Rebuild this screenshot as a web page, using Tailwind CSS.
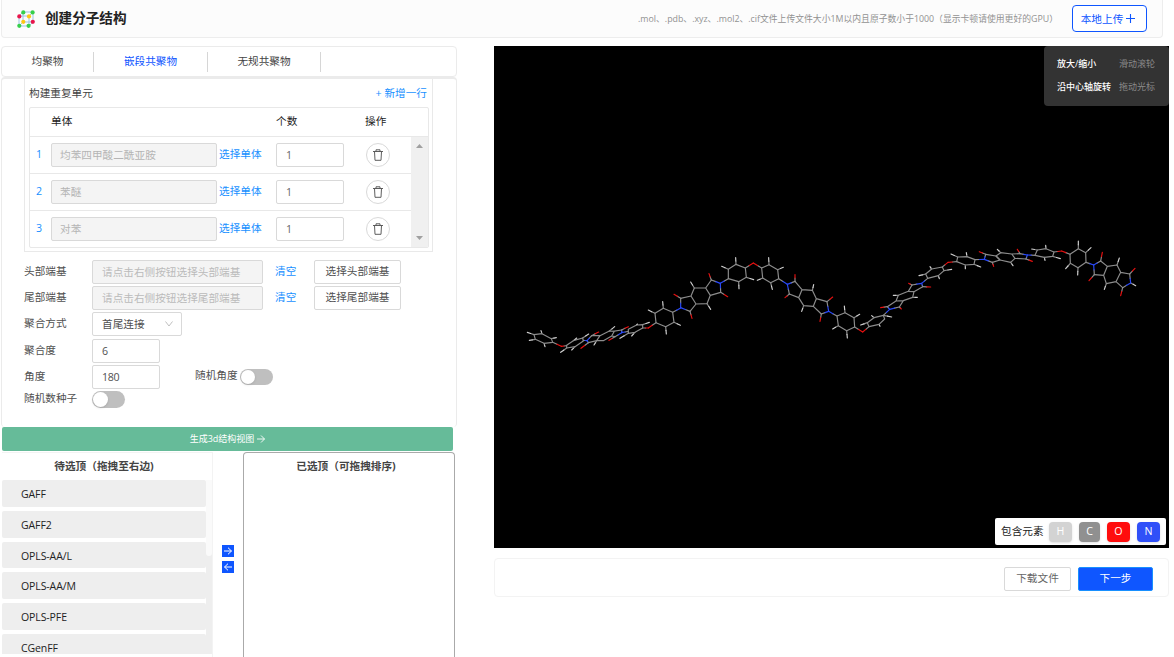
<!DOCTYPE html>
<html lang="zh-CN">
<head>
<meta charset="utf-8">
<title>创建分子结构</title>
<script src="https://cdn.jsdelivr.net/npm/@tailwindcss/browser@4"></script>
</head>
<body class="bg-white">
<div class="flex h-[657px] w-[1174px] flex-col overflow-hidden font-['Open_Sans','Noto_Sans_CJK_SC',sans-serif] text-[10.65px] leading-4 whitespace-nowrap text-[#505050]">
  <header class="ml-px flex h-[38px] w-[1162px] shrink-0 items-center rounded-b border border-t-0 border-[#ededed] bg-[#fcfcfc] pr-[15px] pl-[15px]">
    <svg class="h-[18px] w-[18px] shrink-0" viewBox="0 0 18 18">
      <path d="M6 2H16V12L12 16H2V6ZM2 6H12V16M12 6L16 2M6 2V12H16M6 12L2 16" fill="none" stroke="#9cc4e4" stroke-width="1"/>
      <g fill="#36d04a"><circle cx="6.3" cy="2.4" r="2.1"/><circle cx="15.6" cy="2.4" r="2.1"/><circle cx="2.3" cy="15.8" r="2.1"/><circle cx="11.6" cy="15.8" r="2.1"/></g>
      <g fill="#e8154a"><circle cx="2.3" cy="6.4" r="2.1"/><circle cx="15.8" cy="11.8" r="2.1"/></g>
      <g fill="#fdc713"><circle cx="12" cy="6.4" r="2.1"/><circle cx="6.3" cy="11.8" r="2.1"/></g>
    </svg>
    <h1 class="ml-[10px] pb-[2px] text-[13.6px] font-bold text-[#222]">创建分子结构</h1>
    <p class="mr-[14px] ml-auto text-[8.82px] text-[#929292]">.mol、.pdb、.xyz、.mol2、.cif文件上传文件大小1M以内且原子数小于1000（显示卡顿请使用更好的GPU）</p>
    <button class="flex h-[27px] w-[75px] shrink-0 items-center justify-center gap-[3px] rounded border border-[#0f56ff] bg-white pr-[3px] text-[#0f56ff]">本地上传<svg class="h-[9px] w-[9px]" viewBox="0 0 9 9"><path d="M4.5 0V9M0 4.5H9" stroke="currentColor" stroke-width="1.1"/></svg></button>
  </header>

  <div class="mt-2 ml-px flex min-h-0 flex-1">
    <section class="flex w-[456px] shrink-0 flex-col">
      <nav class="flex h-[31px] shrink-0 items-center rounded-sm border border-[#ebebeb] text-[#444]">
        <div class="flex h-[20px] w-[92px] items-center justify-center border-r border-[#d6d6d6] pb-[2px]">均聚物</div>
        <div class="flex h-[20px] w-[114px] items-center justify-center border-r border-[#d6d6d6] pb-[2px] text-[#0f56ff]">嵌段共聚物</div>
        <div class="flex h-[20px] w-[113px] items-center justify-center border-r border-[#d6d6d6] pb-[2px]">无规共聚物</div>
      </nav>
      <div class="h-[350px] shrink-0 rounded-sm border border-t-2 border-b-0 border-[#ebebeb] pl-[22px]">
        <div class="h-[173px] w-[409px] border border-t-0 border-[#e9e9e9] px-[4px]">
          <div class="flex h-[28px] items-center justify-between pr-px text-[#444]"><span>构建重复单元</span><span class="text-[#1890ff]">+ 新增一行</span></div>
          <div class="h-[141px] w-[400px] overflow-hidden rounded-xs border border-[#e8e8e8]">
            <div class="flex h-[28px] items-center pb-[2px] pl-[21px] text-[#222]"><span class="w-[225px]">单体</span><span class="w-[89px]">个数</span><span>操作</span></div>
            <div class="flex h-[111px]">
              <div id="rows" class="w-[381px]"></div>
              <div class="flex w-[17px] flex-col items-center justify-between border-t border-[#e8e8e8] bg-[#f0f0f0] py-[7px]">
                <svg class="h-1 w-[7px]" viewBox="0 0 7 4"><path d="M0 4L3.5 0L7 4Z" fill="#a0a0a0"/></svg>
                <svg class="h-1 w-[7px]" viewBox="0 0 7 4"><path d="M0 0L3.5 4L7 0Z" fill="#a0a0a0"/></svg>
              </div>
            </div>
          </div>
        </div>
        <div class="mt-[8px] flex h-[24px]"><span class="w-[68px] pt-[3px]">头部端基</span><div class="flex w-[171px] items-center rounded-xs border border-[#d9d9d9] bg-[#f4f4f4] pl-[9px] text-[#bbb]">请点击右侧按钮选择头部端基</div><span class="ml-[12px] w-[39px] pt-[3px] text-[#1890ff]">清空</span><button class="w-[87px] rounded-xs border border-[#d9d9d9] pb-[2px]">选择头部端基</button></div>
        <div class="mt-[2px] flex h-[24px]"><span class="w-[68px] pt-[3px]">尾部端基</span><div class="flex w-[171px] items-center rounded-xs border border-[#d9d9d9] bg-[#f4f4f4] pl-[9px] text-[#bbb]">请点击右侧按钮选择尾部端基</div><span class="ml-[12px] w-[39px] pt-[3px] text-[#1890ff]">清空</span><button class="w-[87px] rounded-xs border border-[#d9d9d9] pb-[2px]">选择尾部端基</button></div>
        <div class="mt-[2px] flex h-[24px]"><span class="w-[68px] pt-[3px]">聚合方式</span><div class="flex w-[90px] items-center justify-between rounded-xs border border-[#d9d9d9] pr-[8px] pl-[9px]">首尾连接<svg class="h-[6px] w-[8px]" viewBox="0 0 8 6"><path d="M.5 .5L4 5L7.5 .5" fill="none" stroke="#b8b8b8" stroke-width=".9"/></svg></div></div>
        <div class="mt-[3px] flex h-[24px]"><span class="w-[68px] pt-[3px]">聚合度</span><div class="flex w-[68px] items-center rounded-xs border border-[#d9d9d9] pl-[9px]">6</div></div>
        <div class="mt-[2px] flex h-[24px]"><span class="w-[68px] pt-[3px]">角度</span><div class="flex w-[68px] items-center rounded-xs border border-[#d9d9d9] pl-[9px] tracking-[-0.3px]">180</div><span class="ml-[35px] w-[45px] pt-[2px]">随机角度</span><div class="mt-[4px] h-[16px] w-[33px] rounded-full bg-[#bfbfbf] p-px"><div class="h-[14px] w-[14px] rounded-full bg-white shadow-sm"></div></div></div>
        <div class="mt-[2px] flex h-[17px]"><span class="w-[68px] leading-[14px]">随机数种子</span><div class="h-[17px] w-[33px] rounded-full bg-[#bfbfbf] p-px"><div class="h-[15px] w-[15px] rounded-full bg-white shadow-sm"></div></div></div>
      </div>
      <button class="ml-px flex h-[24px] w-[451px] shrink-0 items-center justify-center gap-[3px] rounded-xs bg-[#66bb99] text-[9px] text-white">生成3d结构视图<svg class="h-[8px] w-[8px]" viewBox="0 0 8 8"><path d="M0 4H7.5M4 .5L7.5 4L4 7.5" fill="none" stroke="white" stroke-width=".9"/></svg></button>
      <div class="mt-px flex min-h-0 flex-1 pl-px">
        <div class="w-[211px] border-t border-r border-[#f3f3f3]">
          <h2 class="h-[27px] pr-[6px] text-center leading-[27px] font-bold text-[#444]">待选顶（拖拽至右边)</h2>
          <div class="flex h-[174px] overflow-hidden">
            <div id="fields" class="flex w-[204px] flex-col gap-[4px] text-[10.5px] text-[#222]"></div>
            <div class="w-[6px] bg-[#eee]"><div class="h-[76px] rounded-b bg-[#fafafa]"></div></div>
          </div>
        </div>
        <div class="flex w-[30px] flex-col items-center gap-1 pt-[93px]">
          <svg class="h-[12px] w-[12px] bg-[#0f56ff]" viewBox="0 0 12 12"><path d="M2 6H9.5M6 2.7L9.5 6L6 9.3" fill="none" stroke="white" stroke-width="1"/></svg>
          <svg class="h-[12px] w-[12px] bg-[#0f56ff]" viewBox="0 0 12 12"><path d="M10 6H2.5M6 2.7L2.5 6L6 9.3" fill="none" stroke="white" stroke-width="1"/></svg>
        </div>
        <div class="w-[212px] rounded-t border border-b-0 border-[#aaa]"><h2 class="pr-[6px] text-center leading-[27px] font-bold text-[#444]">已选顶（可拖拽排序)</h2></div>
      </div>
    </section>

    <section class="ml-[37px] w-[675px] shrink-0">
      <div class="relative h-[502px] bg-black">
        <svg id="mol" class="h-[502px] w-[675px]" viewBox="0 0 675 502" fill="none" stroke-linecap="round"></svg>
        <div class="absolute top-0 right-0 flex h-[60px] w-[125px] flex-col justify-center gap-[7px] rounded bg-[#333] pb-[2px] pl-[13px] text-[9px] text-white">
          <div class="flex"><span class="w-[62px] font-medium">放大/缩小</span><span class="text-[#8a8a8a]">滑动滚轮</span></div>
          <div class="flex"><span class="w-[62px] font-medium">沿中心轴旋转</span><span class="text-[#8a8a8a]">拖动光标</span></div>
        </div>
        <div class="absolute right-[3px] bottom-[3px] flex h-[27px] w-[171px] items-center rounded-xs bg-white pl-[6px] text-[#222]">
          <span class="w-[48px] pb-[2px]">包含元素</span>
          <div class="flex text-white">
            <span class="mr-[7px] h-5 w-[23px] rounded bg-[#d3d3d3] text-center leading-[18px] shadow-sm">H</span>
            <span class="mr-[7px] h-5 w-[21px] rounded bg-[#909090] text-center leading-[18px] shadow-sm">C</span>
            <span class="mr-[7px] h-5 w-[23px] rounded bg-[#ff0d0d] text-center leading-[18px] shadow-sm">O</span>
            <span class="h-5 w-[23px] rounded bg-[#3050f8] text-center leading-[18px] shadow-sm">N</span>
          </div>
        </div>
      </div>
      <footer class="mt-[10px] flex h-[39px] items-center justify-end gap-[7px] rounded border border-[#f3f3f3] pt-[2px] pr-[15px]">
        <button class="h-[24px] w-[67px] rounded-xs border border-[#d9d9d9] pb-[2px] text-[#666]">下载文件</button>
        <button class="h-[24px] w-[75px] rounded-xs border border-[#1890ff] bg-[#0f56ff] pb-[2px] text-white">下一步</button>
      </footer>
    </section>
  </div>
</div>
<script>
document.getElementById('rows').innerHTML = ['均苯四甲酸二酰亚胺', '苯醚', '对苯'].map((n, i) => `
  <div class="flex h-[37px] items-center border-t border-[#e8e8e8] text-[#1890ff]">
    <span class="w-[21px] pb-[2px] pl-[6px]">${i + 1}</span>
    <div class="flex h-[24px] w-[166px] items-center rounded-xs border border-[#d9d9d9] bg-[#f4f4f4] pl-[8px] text-[#b5b5b5]">${n}</div>
    <span class="w-[59px] pb-[2px] pl-[2px]">选择单体</span>
    <div class="flex h-[24px] w-[68px] items-center rounded-xs border border-[#d9d9d9] pl-[9px] text-[#666]">1</div>
    <div class="ml-[22px] flex h-[24px] w-[24px] items-center justify-center rounded-full border border-[#d9d9d9]">
      <svg class="h-[12px] w-[10px]" viewBox="0 0 10 12" fill="none" stroke="#555" stroke-width=".95"><path d="M0 2.5H10M3 2.5V.8H7V2.5M1.5 2.5L2 11.3H8L8.5 2.5"/></svg>
    </div>
  </div>`).join('');
document.getElementById('fields').innerHTML = ['GAFF', 'GAFF2', 'OPLS-AA/L', 'OPLS-AA/M', 'OPLS-PFE', 'CGenFF'].map(n =>
  `<div class="h-[26.8px] shrink-0 rounded-xs bg-[#eee] pl-[19px] leading-[28px] tracking-[-0.1px]">${n}</div>`).join('');

// Each fragment: origin, carbon paths, then [from, to] bonds to H, O and N atoms.
const fragments = [
  { o: [26, 244],
    c: 'M42 134L66 131L94 146L98 157L72 160L46 148ZM140 166L160 152L188 144L190 153L165 170L140 174ZM215 137L240 137L230 152L205 158M240 137L268 123L283 124L275 138L250 152L230 152M278 124L305 120M275 138L285 140M325 118L350 105L368 104L368 114L345 127L325 130ZM408 98L405 70L430 55L458 67L462 97L437 110Z',
    h: '42 134 22 127,66 131 63 122,94 146 109 143,72 160 75 170,46 148 28 151,160 152 170 144,188 144 206 132,140 174 122 187,165 170 155 180,268 123 284 110,230 152 222 165,350 105 352 102,368 104 388 97,325 130 300 145,345 127 335 138,405 70 385 60,430 55 428 35,462 97 481 106,437 110 439 132',
    r: '98 157 124 169,140 167 124 169,215 137 236 126,205 158 183 175,305 120 325 110,285 140 267 151,368 114 385 114,408 98 385 114',
    n: '190 151 201 152,215 137 201 152,205 158 201 152,305 120 305 128,285 140 305 128,325 124 305 128,458 67 482 54' },
  { o: [166, 199],
    c: 'M62 160L93 153L108 177L90 199M93 153L103 129L137 129L151 151L141 176L108 177M137 129L154 105M151 151L182 142M205 101L205 73L228 58L256 69L259 97L236 110ZM305 69L327 59L353 74L356 101L332 113L308 99ZM405 109L426 134L416 158L388 147M426 134L457 136L469 161L460 184L431 182L416 158M469 161L501 170M460 184L484 207M531 213L555 203L582 218L584 246L560 257L535 242Z',
    h: '103 129 92 111,141 176 152 193,205 73 185 64,228 58 227 38,259 97 281 104,236 110 237 131,327 59 326 38,353 74 370 67,332 113 337 133,308 99 292 106,457 136 461 119,431 182 425 199,555 203 553 183,582 218 599 208,560 257 562 279,535 242 518 252',
    r: '62 160 42 148,90 199 96 220,154 105 147 86,182 142 203 155,256 69 280 54,305 69 280 54,405 109 405 89,388 147 375 158,501 170 518 156,484 207 480 229,584 246 608 261',
    n: '62 160 62 188,90 199 62 188,154 105 181 115,182 142 181 115,205 101 181 115,356 101 382 118,405 109 382 118,388 147 382 118,501 170 506 199,484 207 506 199,531 213 506 199' },
  { o: [346, 189],
    c: 'M87 275L82 263L102 248L130 241L134 252L117 268ZM142 215L168 198L190 197L178 216M168 198L175 181L205 169L222 170L218 187L190 197M205 169L216 150M222 170L248 155M263 130L257 117L275 102L307 96L312 107L295 122ZM350 80L353 66L381 65L405 74L402 88L376 90ZM437 58L468 63L480 75L457 82',
    h: '82 263 62 270,102 248 95 242,130 241 155 246,117 268 120 274,175 181 160 181,218 187 232 187,257 117 237 122,275 102 270 95,312 107 335 103,295 122 298 131,353 66 333 57,381 65 379 53,402 88 422 96,376 90 376 101',
    r: '87 275 68 291,142 215 122 218,178 216 184 222,216 150 206 145,248 155 272 156,307 96 324 82,350 80 324 82,437 58 418 50,457 82 461 94',
    n: '130 241 149 223,142 215 149 223,178 216 149 223,216 150 245 145,248 155 245 145,263 130 245 145,405 74 433 73,437 58 433 73,457 82 433 73' },
  { o: [486, 189],
    c: 'M48 63L62 53L95 57L105 70L92 82L60 75ZM95 57L120 56M105 70L138 72M165 61L172 45L198 41L222 51L218 64L193 67ZM270 58L295 41L317 53L318 82L294 98L271 85ZM362 78L382 94L371 121L343 119M382 94L411 90L422 112L408 140L379 146L371 121M422 112L449 117M408 140L428 158',
    h: '62 53 52 43,92 82 99 92,172 45 155 42,198 41 197 31,218 64 241 71,193 67 195 76,295 41 295 18,317 53 333 38,294 98 293 120,271 85 257 101,411 90 418 69,379 146 373 163,452 144 467 152',
    r: '120 56 112 43,138 72 157 79,222 51 245 48,270 58 245 48,362 78 367 52,343 119 327 137,449 117 465 100,428 158 422 182',
    n: '120 56 142 60,138 72 142 60,165 61 142 60,318 82 341 90,362 78 341 90,343 119 341 90,449 117 452 144,428 158 452 144' }
];
const bonds = (list, color) => list.split(',').map(b => {
  const [x1, y1, x2, y2] = b.split(' ').map(Number), mx = (x1 + x2) / 2, my = (y1 + y2) / 2;
  return `<path d="M${x1} ${y1}L${mx} ${my}" stroke="#8c8c8c"/><path d="M${mx} ${my}L${x2} ${y2}" stroke="${color}"/>`;
}).join('');
document.getElementById('mol').innerHTML = fragments.map(f =>
  `<g transform="translate(${f.o}) scale(.33333)" stroke-width="3.5" stroke-linejoin="round"><path d="${f.c}" stroke="#8c8c8c"/>${bonds(f.h, '#d0d0d0')}${bonds(f.r, '#e81010')}${bonds(f.n, '#2848f8')}</g>`).join('');
</script>
</body>
</html>
